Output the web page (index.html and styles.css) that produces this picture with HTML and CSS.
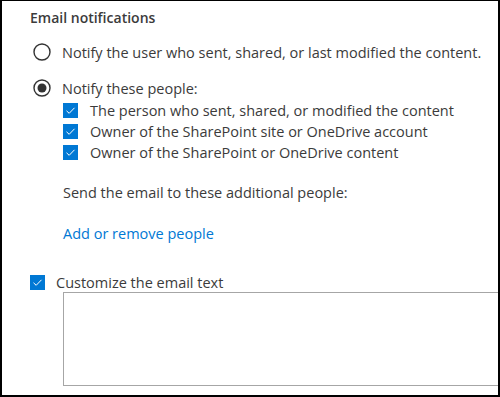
FILE: index.html
```html
<!DOCTYPE html>
<html lang="en">
<head>
    <meta charset="UTF-8">
    <meta name="viewport" content="width=device-width, initial-scale=1.0">
    <title>Email notifications</title>
    <link rel="stylesheet" href="styles.css">
</head>
<body>
    <div class="panel">
        <div class="heading">Email notifications</div>

        <div class="radio-row first">
            <svg class="radio" width="18" height="18" viewBox="0 0 18 18">
                <circle cx="9" cy="9" r="8" fill="#fff" stroke="#333" stroke-width="1.4"/>
            </svg>
            <span>Notify the user who sent, shared, or last modified the content.</span>
        </div>

        <div class="radio-row second">
            <svg class="radio" width="18" height="18" viewBox="0 0 18 18">
                <circle cx="9" cy="9" r="8" fill="#fff" stroke="#333" stroke-width="1.4"/>
                <circle cx="9" cy="9" r="4.5" fill="#333"/>
            </svg>
            <span>Notify these people:</span>
        </div>

        <div class="checks">
            <div class="check-row">
                <svg class="check" width="15" height="15" viewBox="0 0 15 15">
                    <rect width="15" height="15" fill="#0078d4"/>
                    <path d="M3.5 7.8 L6.2 10.3 L11.5 4.8" fill="none" stroke="#fff" stroke-width="1"/>
                </svg>
                <span>The person who sent, shared, or modified the content</span>
            </div>
            <div class="check-row">
                <svg class="check" width="15" height="15" viewBox="0 0 15 15">
                    <rect width="15" height="15" fill="#0078d4"/>
                    <path d="M3.5 7.8 L6.2 10.3 L11.5 4.8" fill="none" stroke="#fff" stroke-width="1"/>
                </svg>
                <span>Owner of the SharePoint site or OneDrive account</span>
            </div>
            <div class="check-row">
                <svg class="check" width="15" height="15" viewBox="0 0 15 15">
                    <rect width="15" height="15" fill="#0078d4"/>
                    <path d="M3.5 7.8 L6.2 10.3 L11.5 4.8" fill="none" stroke="#fff" stroke-width="1"/>
                </svg>
                <span>Owner of the SharePoint or OneDrive content</span>
            </div>
        </div>

        <div class="send">Send the email to these additional people:</div>
        <a class="people-link" href="#">Add or remove people</a>

        <div class="custom-row">
            <svg class="check" width="15" height="15" viewBox="0 0 15 15">
                <rect width="15" height="15" fill="#0078d4"/>
                <path d="M3.5 7.8 L6.2 10.3 L11.5 4.8" fill="none" stroke="#fff" stroke-width="1"/>
            </svg>
            <span>Customize the email text</span>
        </div>
        <textarea class="email-text"></textarea>
    </div>
</body>
</html>
```

FILE: styles.css
```css
body {
    margin: 0;
    font-family: "Open Sans", "Noto Sans", sans-serif;
    color: #3b3b3b;
}
.panel {
    width: 500px;
    height: 397px;
    box-sizing: border-box;
    border: 2px solid #000;
    border-top-width: 1px;
    padding: 7px 0 0 28px;
    background: #fff;
    overflow: hidden;
}
.heading {
    font-size: 14px;
    font-weight: 600;
    line-height: 20px;
    height: 20px;
}
.radio-row {
    display: flex;
    align-items: center;
    height: 24px;
    font-size: 14.5px;
    margin-top: 12px;
}
.radio {
    margin-left: 3px;
    margin-right: 11px;
    flex-shrink: 0;
}
.checks {
    padding-left: 33px;
}
.check-row {
    display: flex;
    align-items: center;
    height: 21px;
    font-size: 14.5px;
}
.check {
    flex-shrink: 0;
    margin-right: 12px;
}
.send {
    margin: 20px 0 0 33px;
    font-size: 14.5px;
    line-height: 20px;
}
.people-link {
    display: block;
    margin: 21px 0 0 33px;
    font-size: 14.5px;
    line-height: 20px;
    color: #0078d4;
    text-decoration: none;
    width: max-content;
}
.custom-row {
    display: flex;
    align-items: center;
    height: 20px;
    margin-top: 28px;
    font-size: 14.5px;
}
.custom-row .check {
    margin-right: 11px;
}
.email-text {
    display: block;
    box-sizing: border-box;
    margin: 0 0 0 33px;
    width: 437px;
    height: 94px;
    border: 1px solid #a6a6a6;
    border-right: 0;
    resize: none;
    outline: none;
}
```
